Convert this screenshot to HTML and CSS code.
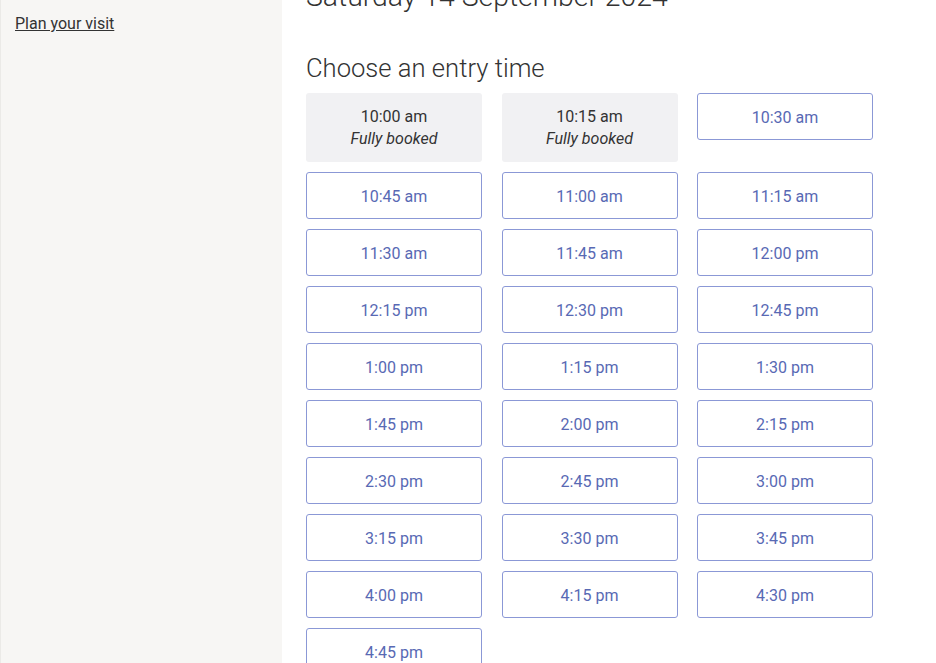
FILE: index.html
```html
<!DOCTYPE html>
<html lang="en">
<head>
    <meta charset="UTF-8">
    <meta name="viewport" content="width=device-width, initial-scale=1.0">
    <title>Choose an entry time</title>
    <link rel="stylesheet" href="styles.css">
</head>
<body>

    <div class="page">
        <!-- Боковая панель -->
        <aside class="sidebar">
            <a href="#" class="side-link">Plan your visit</a>
        </aside>

        <!-- Основная часть -->
        <main class="content">
            <h1 class="date-title">Saturday 14 September 2024</h1>
            <h2 class="section-title">Choose an entry time</h2>

            <div class="slots">
                <div class="slot booked">10:00 am<br><em>Fully booked</em></div>
                <div class="slot booked">10:15 am<br><em>Fully booked</em></div>
                <button class="slot">10:30 am</button>
                <button class="slot">10:45 am</button>
                <button class="slot">11:00 am</button>
                <button class="slot">11:15 am</button>
                <button class="slot">11:30 am</button>
                <button class="slot">11:45 am</button>
                <button class="slot">12:00 pm</button>
                <button class="slot">12:15 pm</button>
                <button class="slot">12:30 pm</button>
                <button class="slot">12:45 pm</button>
                <button class="slot">1:00 pm</button>
                <button class="slot">1:15 pm</button>
                <button class="slot">1:30 pm</button>
                <button class="slot">1:45 pm</button>
                <button class="slot">2:00 pm</button>
                <button class="slot">2:15 pm</button>
                <button class="slot">2:30 pm</button>
                <button class="slot">2:45 pm</button>
                <button class="slot">3:00 pm</button>
                <button class="slot">3:15 pm</button>
                <button class="slot">3:30 pm</button>
                <button class="slot">3:45 pm</button>
                <button class="slot">4:00 pm</button>
                <button class="slot">4:15 pm</button>
                <button class="slot">4:30 pm</button>
                <button class="slot">4:45 pm</button>
            </div>
        </main>
    </div>

</body>
</html>
```

FILE: styles.css
```css
body {
    margin: 0;
    background-color: #fff;
    color: #333;
    font-family: Roboto, "Liberation Sans", sans-serif;
    overflow: hidden;
}

.page {
    display: flex;
    min-height: 100vh;
}

.sidebar {
    width: 282px;
    flex-shrink: 0;
    background-color: #f7f6f4;
    border-left: 1px solid #ebeae7;
    padding: 14px 0 0 14px;
    box-sizing: border-box;
}

.side-link {
    color: #333;
    font-size: 16px;
    line-height: 20px;
    text-decoration: underline;
}

.content {
    padding-left: 24px;
}

.date-title {
    margin: -20px 0 0;
    font-size: 28.4px;
    font-weight: 300;
    line-height: 34px;
    color: #333;
}

.section-title {
    margin: 39px 0 9px;
    font-size: 25.6px;
    font-weight: 300;
    line-height: 31px;
    color: #333;
}

.slots {
    display: grid;
    grid-template-columns: repeat(3, 176px);
    column-gap: 19.5px;
    row-gap: 10px;
    align-items: start;
}

.slot {
    height: 47px;
    margin: 0;
    padding: 1px 0 0;
    background-color: #fff;
    border: 1px solid #8b98d6;
    border-radius: 3px;
    color: #5869b4;
    font-family: inherit;
    font-size: 16px;
    cursor: pointer;
}

.slot:hover {
    background-color: #f3f4fb;
}

.slot.booked {
    height: 69px;
    padding: 13px 0 0;
    box-sizing: border-box;
    background-color: #f1f1f3;
    border: none;
    color: #333;
    line-height: 22px;
    text-align: center;
    cursor: default;
}
```
